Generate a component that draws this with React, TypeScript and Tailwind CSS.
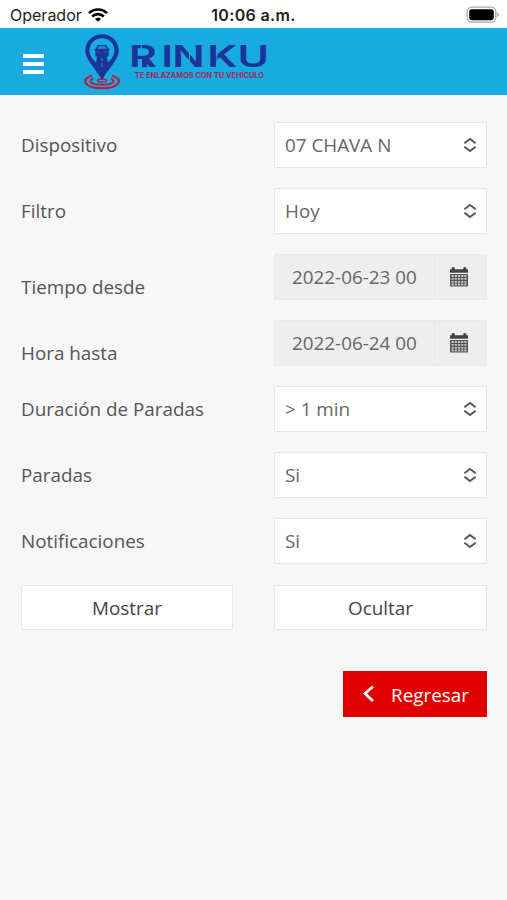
import { clsx } from 'clsx';

interface Field {
  label: string;
  value: string;
  type: 'select' | 'date';
}

const fields: Field[] = [
  { label: 'Dispositivo', value: '07 CHAVA N', type: 'select' },
  { label: 'Filtro', value: 'Hoy', type: 'select' },
  { label: 'Tiempo desde', value: '2022-06-23 00', type: 'date' },
  { label: 'Hora hasta', value: '2022-06-24 00', type: 'date' },
  { label: 'Duración de Paradas', value: '> 1 min', type: 'select' },
  { label: 'Paradas', value: 'Si', type: 'select' },
  { label: 'Notificaciones', value: 'Si', type: 'select' },
];

function WifiIcon() {
  return (
    <svg width="20" height="14" viewBox="0 0 20 14" fill="none" stroke="#000" strokeWidth="2.6">
      <path d="M1 5.2C6 .2 14 .2 19 5.2" />
      <path d="M4.2 8.5C7.4 5.3 12.6 5.3 15.8 8.5" />
      <path d="M10 13.8 7 10.9C8.7 9.4 11.3 9.4 13 10.9Z" fill="#000" stroke="none" />
    </svg>
  );
}

function BatteryIcon() {
  return (
    <svg width="34" height="18" viewBox="0 0 34 18">
      <rect x="1.2" y="1.2" width="28.6" height="15" rx="4.5" fill="#fff" stroke="#a9a9a9" strokeWidth="1.3" />
      <rect x="3.2" y="3.2" width="24.6" height="11" rx="2.4" fill="#000" />
      <path d="M31.2 6.2C33.2 7 33.2 10.4 31.2 11.2Z" fill="#a9a9a9" />
    </svg>
  );
}

function CalendarIcon() {
  return (
    <svg width="18" height="20" viewBox="0 0 18 20">
      <path d="M0 2.2h1.6V1.4a1.6 1.4 0 0 1 3.2 0v.8h8.4v-.8a1.6 1.4 0 0 1 3.2 0v.8H18v3.6H0Z" fill="#444" />
      <rect y="7" width="18" height="12.4" rx=".6" fill="#555" />
      <path
        d="M1.5 9h15M1.5 11.900h15M1.5 14.800h15M1.5 17.500h15"
        stroke="#c4c4c4"
        strokeWidth="1.8"
        strokeDasharray="2.2 1"
      />
    </svg>
  );
}

function SortIcon() {
  return (
    <svg width="14" height="16" viewBox="0 0 14 16" fill="none" stroke="#555" strokeWidth="1.9">
      <path d="M1.4 6.3 7 1.9l5.6 4.4M1.4 9.7 7 14.1l5.6-4.4" />
    </svg>
  );
}

function Logo() {
  return (
    <svg width="188" height="62" viewBox="0 0 188 62">
      {/* ripples under the pin */}
      <g fill="none" stroke="#b32146">
        <path d="M9 43.5C-3 47 1 56.2 19 56.2S41 47 29 43.5" strokeWidth="2.2" />
        <path d="M10 46.5C4 49.5 9 52.8 19 52.8s15-3.3 9-6.3" strokeWidth="2" />
        <ellipse cx="19" cy="48.5" rx="4.5" ry="1.5" strokeWidth="1.6" />
      </g>
      {/* map pin with the car */}
      <path
        d="M19 2.3C9.5 2.3 2.3 9.5 2.3 18.5c0 8.5 8.2 15.5 16.7 29.500 8.500-14 16.700-21 16.700-29.500C35.700 9.500 28.500 2.300 19 2.300Zm0 4c7.200 0 12.500 5.400 12.500 12.200 0 5-3 8.500-6.500 12L23.500 23h-9L13 30.500C9.500 27 6.500 23.500 6.500 18.500 6.500 11.700 11.800 6.300 19 6.300Z"
        fill="#1c3497"
      />
      <path d="M14.500 13h9l1.700 3.700h1.300v1.500h-.8v6.300h-3V23.500h-7.400V24.500h-3v-6.300h-.8v-1.500h1.300Z" fill="#1c3497" />
      <path d="M15.500 14.600h7l.8 1.800h-8.600ZM14 20h2.500M21.500 20H24" fill="#1b8fd0" stroke="#1b8fd0" strokeWidth=".7" />
      <path d="M19 26v3M19 31v4" stroke="#1b8fd0" strokeWidth="1" />
      <text
        x="31.7 54 61.5 85.7 106.5"
        y="35.3"
        transform="scale(1.45 1)"
        className="font-['Inter'] text-[29.5px] font-semibold"
        fill="#1c3497"
      >
        RINKU
      </text>
      {/* stencil cuts of the wordmark */}
      <path d="M58.2 12v7.300M58.200 27v9" stroke="#18abdf" strokeWidth="1.2" />
      <path d="M59 25h5v10.3h-5Z" fill="#1c3497" />
      <path d="M106.5 20v9M134 19.500v8.500" stroke="#18abdf" strokeWidth="1" />
      <text
        x="52"
        y="46"
        textLength="129"
        lengthAdjust="spacingAndGlyphs"
        className="font-['Inter'] text-[7px] font-bold"
        fill="#a02a5c"
      >
        TE ENLAZAMOS CON TU VEHÍCULO
      </text>
    </svg>
  );
}

function FieldRow({ label, value, type }: Field) {
  const isDate = type === 'date';
  return (
    <div className="flex h-[46px] items-center justify-between">
      <label className={clsx('text-[#555]', isDate && 'pt-5')}>{label}</label>
      {isDate ? (
        <div className="flex h-full w-[213px] border border-[#e9e9e9] bg-[#eee] text-[#666]">
          <span className="flex flex-1 items-center pl-[17px]">{value}</span>
          <span className="flex w-[52px] items-center justify-center border-l border-[#e8e8e8] pr-[3px]">
            <CalendarIcon />
          </span>
        </div>
      ) : (
        <div className="flex h-full w-[213px] items-center justify-between border border-[#e6e6e6] bg-white pr-[9px] pl-2.5 text-[#666]">
          <span>{value}</span>
          <SortIcon />
        </div>
      )}
    </div>
  );
}

export default function App() {
  return (
    <div className="flex h-[900px] w-[507px] flex-col overflow-hidden bg-[#f7f7f7] font-['Open_Sans',sans-serif] text-[18.85px]">
      {/* Status bar */}
      <div className="grid h-7 grid-cols-3 items-center bg-white pt-0.5 pr-[7px] pl-2.5 font-['Inter',sans-serif] text-[16px] text-[#222]">
        <div className="flex items-center gap-1.5">
          <span>Operador</span>
          <WifiIcon />
        </div>
        <span className="pr-[3px] text-center font-semibold tracking-[0.35px]">10:06 a.m.</span>
        <div className="flex justify-end">
          <BatteryIcon />
        </div>
      </div>

      {/* Header */}
      <header className="flex h-[67px] items-start bg-[#18abdf] pl-[23px]">
        <button className="mt-[26px] flex flex-col gap-1" aria-label="Menu">
          <span className="h-1 w-[21px] bg-white" />
          <span className="h-1 w-[21px] bg-white" />
          <span className="h-1 w-[21px] bg-white" />
        </button>
        <div className="mt-1 ml-[39px]">
          <Logo />
        </div>
      </header>

      <main className="flex flex-col px-5 pt-[27px] pl-[21px]">
        <div className="flex flex-col gap-5">
          {fields.map((field) => (
            <FieldRow key={field.label} {...field} />
          ))}
        </div>

        <div className="mt-[21px] flex justify-between text-[#444]">
          <button className="h-[45px] w-[212px] border border-[#e6e6e6] bg-white pt-0.5">Mostrar</button>
          <button className="h-[45px] w-[213px] border border-[#e6e6e6] bg-white pt-0.5">Ocultar</button>
        </div>

        <button className="mt-[41px] flex h-[46px] w-36 items-center self-end bg-[#e10000] pl-[19px] text-white">
          <svg width="13" height="18" viewBox="0 0 13 18" fill="none" stroke="#fff" strokeWidth="2.8">
            <path d="M11 1.5 3 8.5l8 7.5" />
          </svg>
          <span className="ml-4 pt-0.5">Regresar</span>
        </button>
      </main>
    </div>
  );
}
